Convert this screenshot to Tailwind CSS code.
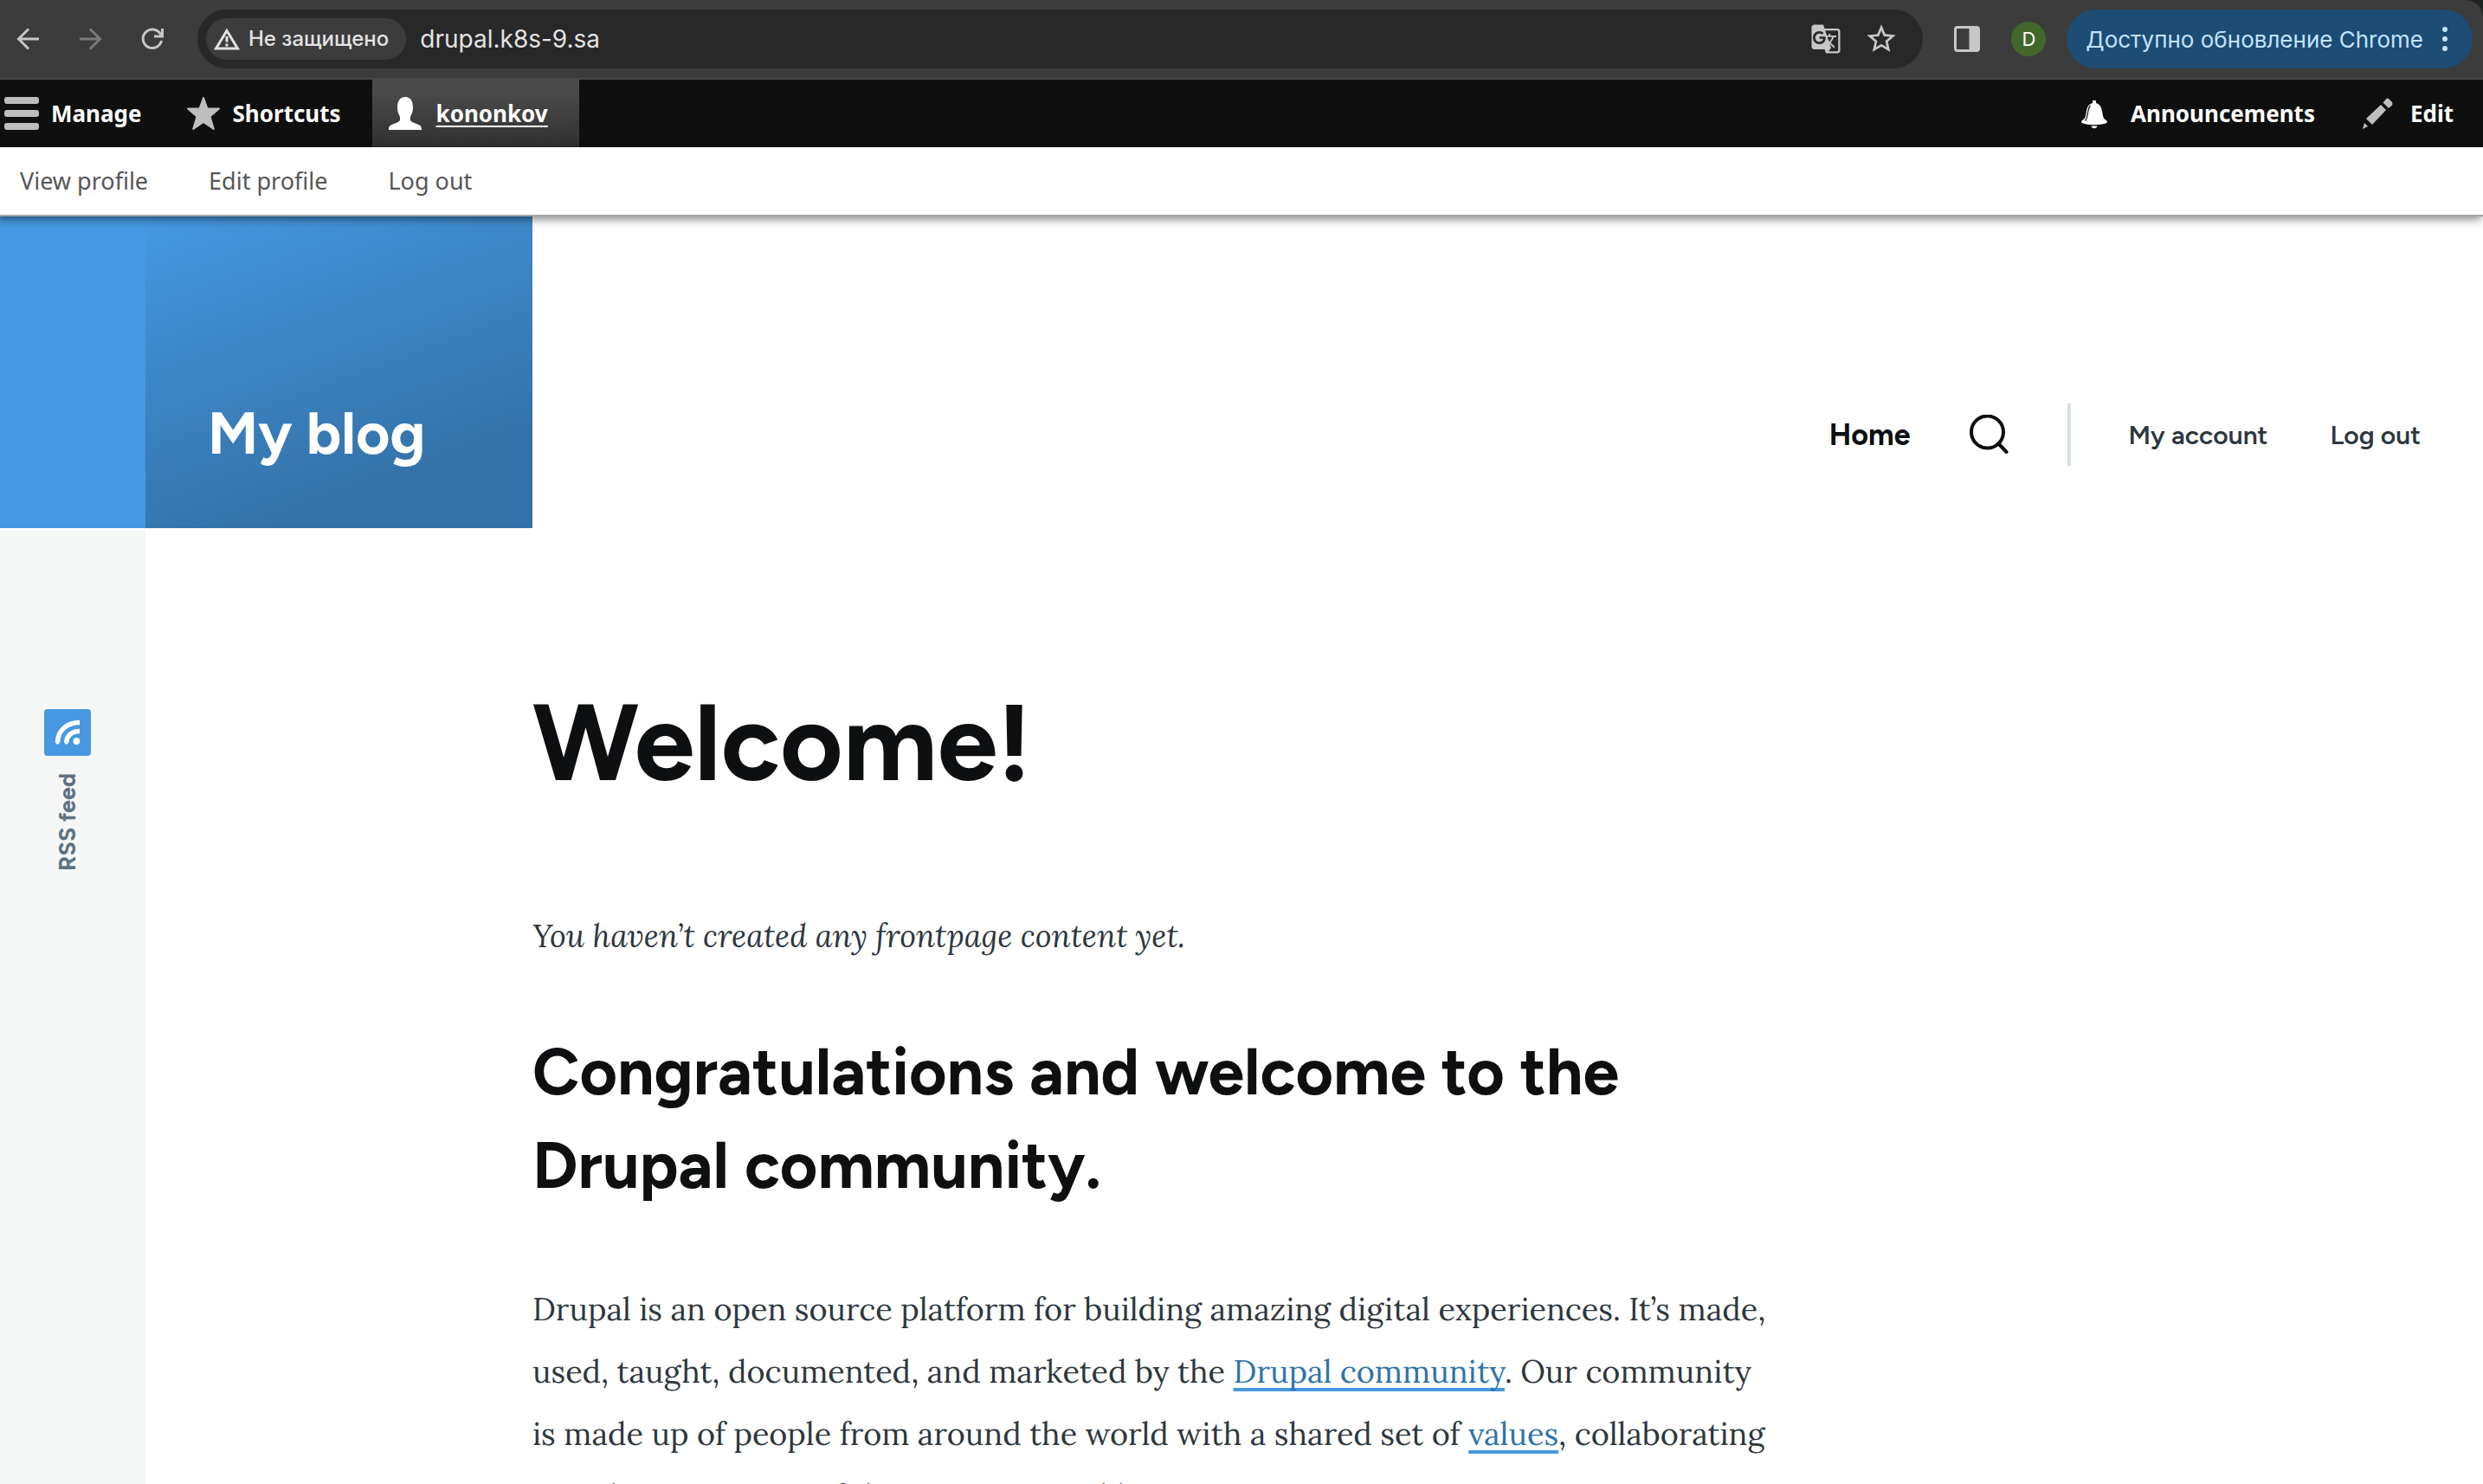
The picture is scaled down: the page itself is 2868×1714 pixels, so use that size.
<!DOCTYPE html>
<html lang="en">
<head>
<meta charset="utf-8">
<title>Welcome! | My blog</title>
<script src="https://cdn.jsdelivr.net/npm/@tailwindcss/browser@4"></script>
</head>
<body class="flex h-screen flex-col overflow-hidden bg-white">

<!-- Browser bar -->
<div class="shrink-0 bg-[#1c221f]">
  <div class="flex h-[92px] items-center rounded-tr-[20px] border-b-2 border-[#474747] bg-[#3c3c3c] pr-3 pl-3 font-['Inter',sans-serif] text-[#c7c7c7]">
    <button aria-label="Back" class="grid w-10 place-items-center">
      <svg width="40" height="40" viewBox="0 0 40 40" fill="none" stroke="#c7c7c7" stroke-width="3"><path d="M33 20H10M21 8.500L9.500 20L21 31.500"/></svg>
    </button>
    <button aria-label="Forward" class="ml-8 grid w-10 place-items-center">
      <svg width="40" height="40" viewBox="0 0 40 40" fill="none" stroke="#7b7b7b" stroke-width="3"><path d="M8 20H31M20 8.500L31.500 20L20 31.500"/></svg>
    </button>
    <button aria-label="Reload" class="ml-8 grid w-10 place-items-center">
      <svg width="40" height="40" viewBox="0 0 40 40" fill="none" stroke="#c7c7c7" stroke-width="3"><path d="M30.500 22A10.800 10.800 0 1 1 28 12.500L31 16"/><path d="M31.500 8V17H22"/></svg>
    </button>
    <div class="ml-8 flex h-[68px] flex-1 items-center rounded-full bg-[#282828] pr-7 pl-[10px]">
      <button class="flex h-12 items-center gap-[10px] rounded-full bg-[#3c3c3c] pr-5 pl-[9px] text-[24px] font-medium text-[#e3e3e3]">
        <svg width="30" height="26" viewBox="0 0 30 26" fill="none" stroke="#e3e3e3" stroke-width="3"><path d="M15 3.500L27.500 24H2.500Z"/><path d="M15 10V16.500M15 18.500V21.500"/></svg>
        Не защищено
      </button>
      <input aria-label="Address" type="text" value="drupal.k8s-9.sa" class="ml-4 flex-1 bg-transparent text-[28px] text-[#e3e3e3] outline-none">
      <button aria-label="Translate">
        <svg width="36" height="36" viewBox="0 0 24 24" fill="#c7c7c7"><path d="M21 4H11l-1-3H3c-1.100 0-2 .9-2 2v15c0 1.100.9 2 2 2h8l1 3h9c1.100 0 2-.9 2-2V6c0-1.100-.9-2-2-2zM7 16c-2.760 0-5-2.240-5-5s2.240-5 5-5c1.350 0 2.480.5 3.350 1.300L9.030 8.570c-.38-.36-1.040-.78-2.030-.78-1.740 0-3.150 1.440-3.150 3.210S5.260 14.210 7 14.210c2.010 0 2.840-1.440 2.920-2.410H7v-1.710h4.680c.07.31.12.61.12 1.020C11.800 13.970 9.890 16 7 16zm6.170-5.420h3.700c-.43 1.250-1.110 2.430-2.050 3.470-.31-.35-.6-.72-.86-1.100l-.79-2.370zm8.330 9.920c0 .55-.45 1-1 1H14l2-2.500-1.040-3.100 3.100 3.100.92-.92-3.300-3.250.02-.02c1.130-1.250 1.930-2.690 2.400-4.220H20v-1.300h-4.530V8h-1.290v1.290h-1.440L11.460 5.500h9.040c.55 0 1 .45 1 1v14z"/></svg>
      </button>
      <button aria-label="Bookmark" class="ml-[26px]">
        <svg width="40" height="40" viewBox="0 0 24 24" fill="#c7c7c7"><path d="M22 9.240l-7.190-.62L12 2 9.190 8.630 2 9.240l5.460 4.730L5.820 21 12 17.270 18.180 21l-1.630-7.030L22 9.240zM12 15.400l-3.760 2.270 1-4.280-3.320-2.880 4.380-.38L12 6.100l1.710 4.040 4.380.38-3.320 2.880 1 4.280L12 15.400z"/></svg>
      </button>
    </div>
    <button aria-label="Side panel" class="ml-9">
      <svg width="30" height="30" viewBox="0 0 30 30"><rect x="1.500" y="1.500" width="27" height="27" rx="2.500" fill="none" stroke="#c7c7c7" stroke-width="3"/><path d="M17.500 1.500H28.500V28.500H17.500Z" fill="#c7c7c7"/></svg>
    </button>
    <button class="ml-9 grid size-10 place-items-center rounded-full bg-[#41682a] text-[22px] text-white">D</button>
    <button class="ml-6 flex h-[68px] items-center gap-[22px] rounded-full bg-[#1d4c74] pr-[29px] pl-[22px] text-[26px] text-[#c2e4ff]">
      Доступно обновление Chrome
      <svg width="6" height="28" viewBox="0 0 6 28" fill="#c2e4ff"><circle cx="3" cy="3" r="3"/><circle cx="3" cy="14" r="3"/><circle cx="3" cy="25" r="3"/></svg>
    </button>
  </div>
</div>

<!-- Admin toolbar -->
<nav aria-label="Toolbar" class="flex h-[78px] shrink-0 justify-between bg-[#0f0f0f] font-['Noto_Sans',sans-serif] text-[26px] font-bold text-white">
  <div class="flex">
    <a href="#" class="flex items-center gap-[14px] pr-[26px] pl-[5px]">
      <svg width="40" height="40" viewBox="0 0 40 40" fill="#bebebe"><rect y="1" width="40" height="8" rx="3"/><rect y="16" width="40" height="8" rx="3"/><rect y="31" width="40" height="8" rx="3"/></svg>
      Manage
    </a>
    <a href="#" class="flex items-center gap-[14px] pr-9 pl-[25px]">
      <svg width="40" height="40" viewBox="0 0 40 40" fill="#bebebe" stroke="#bebebe" stroke-width="2" stroke-linejoin="round"><path d="M20 2L24.500 14.500H38L27.500 23.500L31.800 38L20 30L8.200 38L12.500 23.500L2 14.500H15.500Z"/></svg>
      Shortcuts
    </a>
    <a href="#" class="flex items-center gap-4 bg-linear-to-b from-[#4a4a4a] from-20% to-[#303030] pr-9 pl-[18px] underline decoration-2 underline-offset-4">
      <svg width="40" height="40" viewBox="0 0 40 40" fill="#fff"><path d="M20 1C26.500 1 29 6 29 13C29 19 27 21.500 26 24V28C28 32 39 31.500 39 37.500V39H1V37.500C1 31.500 12 32 14 28V24C13 21.500 11 19 11 13C11 6 13.500 1 20 1Z"/></svg>
      kononkov
    </a>
  </div>
  <div class="flex pr-[34px]">
    <a href="#" class="flex items-center gap-[22px]">
      <svg width="40" height="40" viewBox="0 0 40 40" fill="#fff"><path d="M18 5H22V8C26 9 28 12 29 17C30 23 30 26 34 28C35 29 35 30 34.500 31C26 34 14 34 5.500 31C5 30 5 29 6 28C10 26 10 23 11 17C12 12 14 9 18 8Z"/><path d="M16.500 34.500H23.500C23 38 17 38 16.500 34.500Z"/><path d="M15.500 11C11.500 15 13.500 24 9.500 28.500" fill="none" stroke="#0f0f0f" stroke-width="1.200"/></svg>
      Announcements
    </a>
    <a href="#" class="flex items-center gap-5 pl-[54px]">
      <svg width="36" height="36" viewBox="0 0 36 36" fill="#bebebe"><path d="M22 8L28 14L12 31L5 24Z"/><path d="M24.500 5.500L28 1.500Q29.500 0 31 1L35 5Q36 7 35 8.500L31 12Z"/><path d="M3 29L7 33L1 36Z"/></svg>
      Edit
    </a>
  </div>
</nav>
<nav aria-label="User menu" class="relative z-10 flex h-20 shrink-0 items-center gap-[70px] border-b-2 border-[#a6a6a6] bg-white px-[23px] font-['Noto_Sans',sans-serif] text-[27px] text-[#565656] shadow-[-2px_3px_10px_rgba(0,0,0,0.5)]">
  <a href="#">View profile</a>
  <a href="#">Edit profile</a>
  <a href="#">Log out</a>
</nav>

<!-- Site header -->
<header class="flex h-[360px] shrink-0 items-stretch font-['Figtree',Montserrat,sans-serif]">
  <div class="w-[168px] bg-[#4698e0]"></div>
  <div class="flex w-[447px] items-end bg-linear-[160deg,#4698e0_0%,#3372a8_79%] pb-[74px] pl-[72px]">
    <a href="#" class="text-[68px] leading-[72px] font-bold whitespace-nowrap text-white">My blog</a>
  </div>
  <div class="flex flex-1 items-end justify-end pr-[72px] pb-[72px]">
    <nav aria-label="Main" class="flex h-[72px] items-center text-[30px] font-semibold text-[#2e373d]">
      <a href="#" class="text-[34px] font-bold text-[#0d0f11]">Home</a>
      <button aria-label="Search" class="mx-[68px]">
        <svg width="46" height="46" viewBox="0 0 46 46" fill="none" stroke="#0d0f11" stroke-width="4" stroke-linecap="round"><circle cx="21.500" cy="20" r="18.500"/><path d="M34.500 33.500L43.500 43"/></svg>
      </button>
      <div class="flex h-full items-center gap-[72px] border-l-4 border-[#d7e1e3] pl-[66px]">
        <a href="#">My account</a>
        <a href="#">Log out</a>
      </div>
    </nav>
  </div>
</header>

<div class="flex min-h-0 flex-1">
  <aside class="mt-0.5 w-[168px] shrink-0 bg-[#f5f7f7] pt-[207px] pl-[51px] font-['Figtree',Montserrat,sans-serif]">
    <a href="#" class="flex w-[54px] flex-col items-center gap-5 text-[27px] leading-8 font-bold text-[#60727f]">
      <svg width="54" height="54" viewBox="0 0 54 54"><rect width="54" height="54" rx="4" fill="#4698e0"/><g fill="none" stroke="#fff" stroke-width="5.500"><path d="M15.500 38.500C15.500 25 26 15.500 41 15.500" /><path d="M25.800 38.500C25.800 31 32 25.500 41 25.500"/><path d="M12.800 38.500Q15.500 43 18.200 38.500" stroke="none" fill="#fff"/><path d="M23 38.500Q25.800 43 28.500 38.500" stroke="none" fill="#fff"/></g><circle cx="37.300" cy="37" r="3.900" fill="#fff"/></svg>
      <span class="rotate-180 [writing-mode:vertical-rl]">RSS feed</span>
    </a>
  </aside>
  <main class="min-w-0 flex-1 overflow-hidden pt-[175px] pl-[447px]">
    <div class="max-w-[1430px] font-['Lora','Noto_Serif',serif] text-[36px] leading-[72px] text-[#2e373d]">
      <h1 class="font-['Figtree',Montserrat,sans-serif] text-[125px] leading-[144px] font-bold text-[#0d0f11]">Welcome!</h1>
      <p class="mt-[116px] italic">You haven’t created any frontpage content yet.</p>
      <h2 class="mt-[67px] font-['Figtree',Montserrat,sans-serif] text-[75px] leading-[108px] font-bold text-[#0d0f11]">Congratulations and welcome to the Drupal community.</h2>
      <p class="mt-[76px]">Drupal is an open source platform for building amazing digital experiences. It’s made, used, taught, documented, and marketed by the <a href="#" class="text-[#2f73a9] underline decoration-[#4698e0] decoration-4 underline-offset-[6px] [text-decoration-skip-ink:none]">Drupal community</a>. Our community is made up of people from around the world with a shared set of <a href="#" class="text-[#2f73a9] underline decoration-[#4698e0] decoration-4 underline-offset-[6px] [text-decoration-skip-ink:none]">values</a>, collaborating together in a respectful manner. As we like to say:</p>
    </div>
  </main>
</div>
</body>
</html>
